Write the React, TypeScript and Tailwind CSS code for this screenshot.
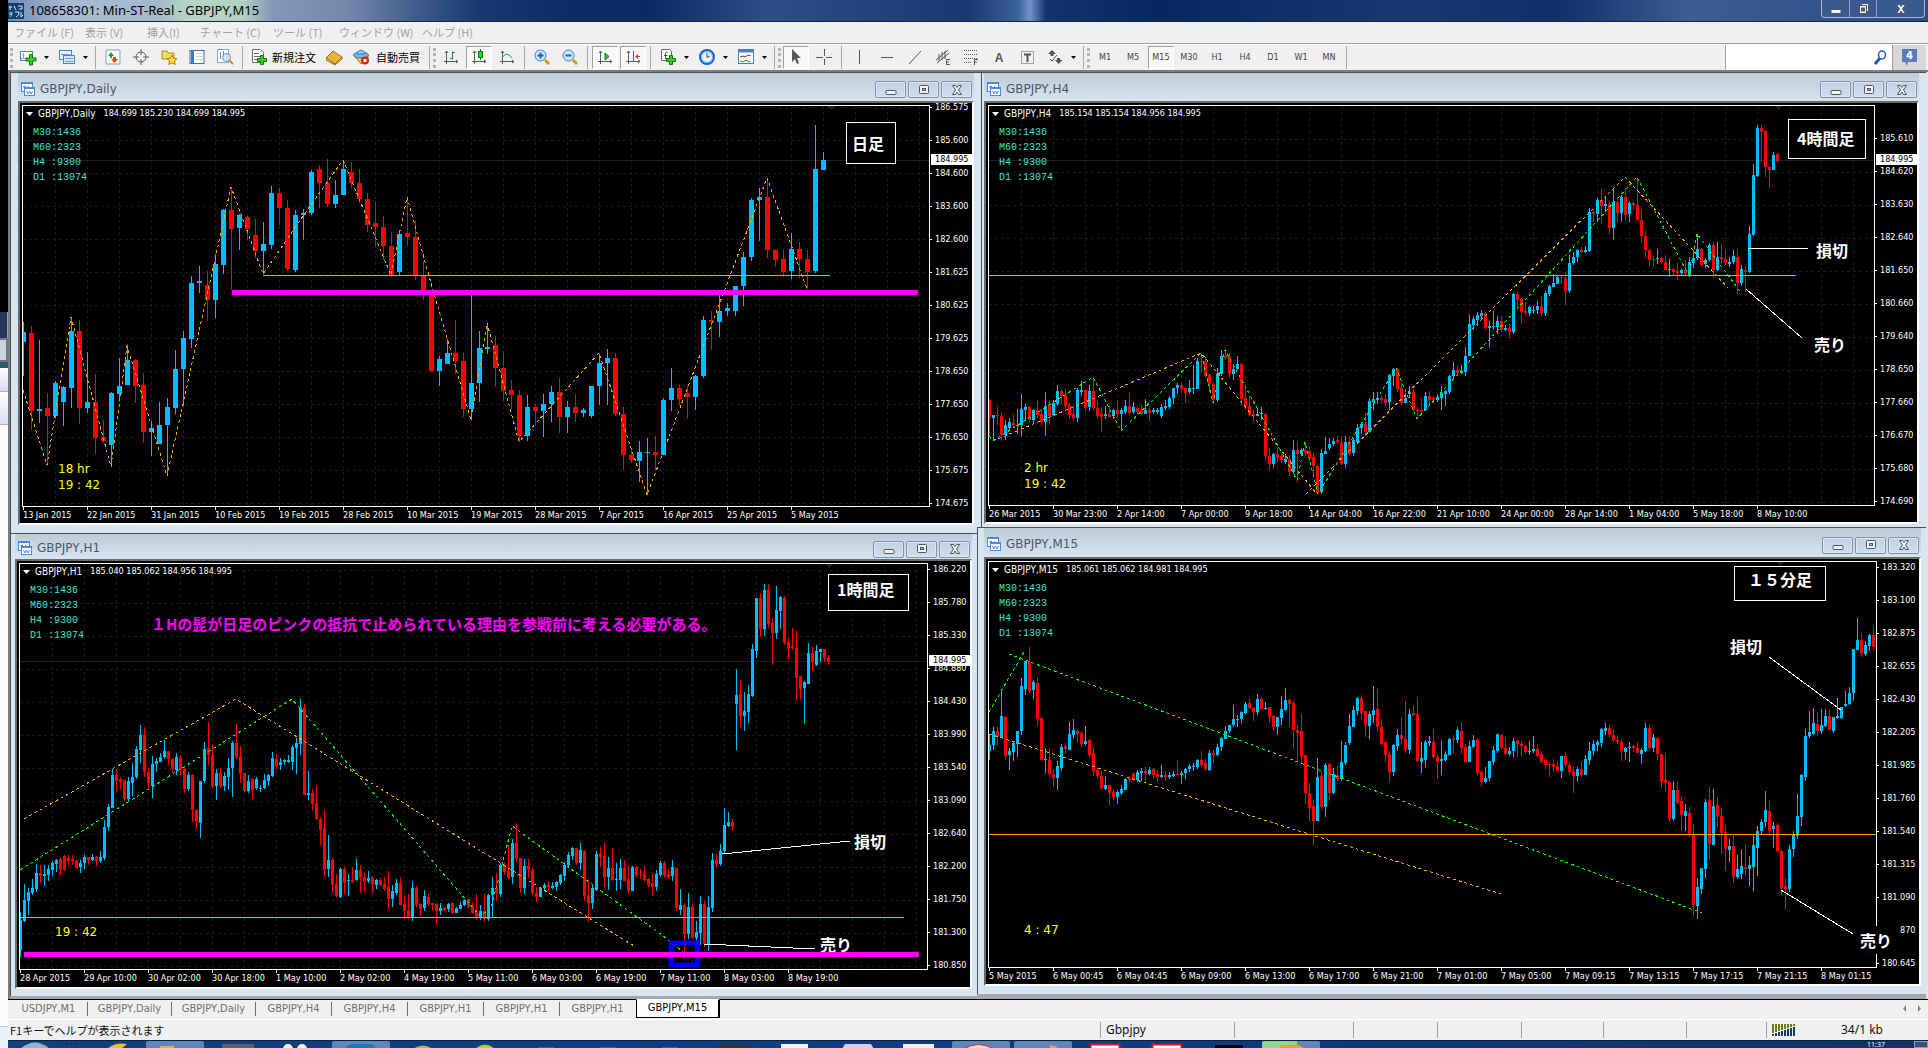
import React from 'react';

type Point = [number, number];

interface Note {
  text: string;
  at: Point;
  color?: string;
  size?: number;
}

interface ChartData {
  title: string;
  quote: string;
  timer: string[];
  origin: Point;
  step: number;
  body: number;
  candles: string;
  grid?: Point;
  bid?: number;
  zigzags: { color: string; points: string }[];
  levels: { y: number; from: number; to: number; color: string; width: number }[];
  pointers: string[];
  notes: Note[];
  box: [number, number, number, number];
  marker?: [number, number, number, number];
  cutout?: [number, number, number, number];
  shift: number;
  prices: string[];
  times: string[];
}

const BULL = '#00bfff';
const BEAR = '#ff0000';
const ORANGE = '#ffa500';
const LIME = '#00ff00';
const MAGENTA = '#ff00ff';

// Every candle is a direction (u/d) followed by high, body top, body bottom, low.
// Chart coordinates are kept in thirds of a pixel.
const daily: ChartData = {
  title: 'GBPJPY,Daily',
  quote: '184.699 185.230 184.699 184.995',
  timer: ['18 hr', '19 : 42'],
  origin: [69, 108],
  step: 24,
  body: 5,
  candles: `u758 788 816 920 d768 791 1025 1082 u810 1019 1025 1061 d969 1016 1038 1185 u933 941 1038 1046 u948 953 996 1070
u742 783 956 1016 d750 783 1016 1064 u846 996 1016 1031 d914 996 1106 1154 d1050 1103 1115 1121 u966 969 1127 1192
u864 948 974 988 u826 872 945 945 d868 872 948 1001 d911 945 1088 1121 u1053 1074 1088 1158 u996 1065 1122 1124
u984 1011 1067 1216 u840 899 1014 1032 u783 804 899 1010 u620 639 807 836 u588 635 641 671 d605 645 692 755
u552 582 692 746 u417 422 585 614 d352 422 479 662 u432 437 476 540 d440 441 479 512 d447 497 545 566
u456 524 545 614 u348 369 527 539 d354 369 416 467 d392 414 599 605 u420 437 602 606 u417 429 437 510
u300 306 431 437 d285 297 341 416 d267 339 404 411 u330 375 404 416 u270 297 375 375 d276 306 341 354
d297 339 389 401 d369 387 465 486 d396 461 473 531 d440 471 530 570 d486 528 620 621 u480 492 608 620
d381 491 503 528 d453 503 615 632 d573 615 660 692 d660 675 905 908 u858 867 905 948 u807 849 884 884
d750 849 875 914 d849 873 1019 1043 u675 939 1019 1050 u783 834 941 998 u760 831 837 854 d798 825 896 953
d843 894 963 995 d930 960 977 1019 d960 975 1098 1118 u975 1011 1098 1115 d1002 1011 1025 1065 u972 1002 1025 1101
u948 966 1004 1058 d924 966 1043 1091 u993 1011 1043 1091 d972 1011 1031 1058 u1014 1020 1031 1043 u948 948 1040 1046
u852 879 950 1005 u837 864 881 1007 d849 864 1034 1040 d1011 1034 1157 1202 d1137 1155 1172 1181 u1113 1146 1175 1236
u1104 1146 1148 1275 d1098 1146 1155 1200 u984 990 1155 1155 u894 954 992 1025 d945 954 987 1007 d948 969 983 1049
u917 918 983 1022 u738 750 920 926 d723 750 758 840 u675 723 758 803 u699 714 725 740 u648 648 725 740
u546 561 650 708 u384 390 563 575 u354 381 392 513 d324 381 542 566 d537 540 572 593 d540 567 608 623
u489 537 605 629 d516 537 569 626 d540 567 608 658 u165 297 605 611 u246 270 302 302`,
  grid: [166, 112],
  bid: 270,
  zigzags: [
    {
      color: ORANGE,
      points:
        '70,960 142,1185 214,742 334,1192 382,828 502,1218 694,352 790,614 838,545 910,440 1030,270 1174,617 1222,381 1294,640 1414,1052 1462,760 1558,1118 1798,850 1942,1276 2302,324 2422,658',
    },
  ],
  levels: [
    { y: 616, from: 790, to: 2492, color: ORANGE, width: 1 },
    { y: 667, from: 697, to: 2755, color: MAGENTA, width: 5 },
  ],
  pointers: [],
  notes: [{ text: '日足', at: [2557, 220] }],
  box: [2539, 157, 148, 123],
  shift: 2512,
  prices: ['186.575', '185.600', '184.600', '183.600', '182.600', '181.625', '180.625', '179.625', '178.650', '177.650', '176.650', '175.675', '174.675'],
  times: ['13 Jan 2015', '22 Jan 2015', '31 Jan 2015', '10 Feb 2015', '19 Feb 2015', '28 Feb 2015', '10 Mar 2015', '19 Mar 2015', '28 Mar 2015', '7 Apr 2015', '16 Apr 2015', '25 Apr 2015', '5 May 2015'],
};

const h4: ChartData = {
  title: 'GBPJPY,H4',
  quote: '185.154 185.154 184.956 184.995',
  timer: ['2 hr', '19 : 42'],
  origin: [27, 108],
  step: 12,
  body: 3,
  candles: `d988 990 1046 1100 u1035 1035 1046 1115 d1010 1035 1040 1065 d1028 1038 1095 1115 u1050 1067 1095 1112 u1046 1056 1074 1080
d1032 1059 1067 1074 u1018 1065 1068 1092 u972 1017 1067 1098 u1002 1012 1020 1050 d1010 1012 1052 1056 u1018 1020 1052 1062
d990 1020 1036 1046 d1018 1034 1058 1070 u968 1010 1058 1098 d990 1010 1038 1066 u992 999 1036 1040 u945 963 1002 1010
d960 963 978 1002 d957 976 1008 1018 d1000 1006 1036 1048 d1005 1034 1046 1055 u954 962 1046 1056 u934 960 966 978
d960 960 1014 1024 u945 965 1012 1024 d924 965 1016 1020 d990 1014 1040 1048 d1012 1034 1041 1088 u1008 1034 1040 1048
d1005 1032 1041 1041 u1018 1020 1040 1048 d990 1020 1034 1046 u1014 1022 1032 1082 u990 1008 1026 1034 d970 1008 1029 1034
u996 1012 1028 1034 d1012 1014 1028 1034 d1005 1022 1032 1036 u987 1020 1032 1034 d1014 1020 1029 1055 u1016 1022 1028 1034
u1014 1020 1028 1034 u1002 1012 1038 1044 u990 1008 1014 1020 u978 984 1012 1018 u954 956 986 1002 u940 945 956 972
d936 945 958 970 d954 956 970 1001 u930 954 968 974 u885 954 957 974 u864 873 957 957 d852 873 878 906
d862 876 918 924 d912 915 944 966 d936 942 992 999 u894 912 992 998 u840 858 914 920 d837 858 864 870
d850 862 914 924 u888 898 914 930 u860 882 898 902 d880 882 988 1010 d950 986 1010 1020 d980 1008 1036 1040
d1022 1034 1040 1058 u1018 1032 1038 1040 u1012 1030 1034 1052 d1030 1032 1160 1174 d1134 1158 1184 1200 u1150 1154 1182 1194
d1134 1154 1164 1176 d1156 1160 1170 1180 u1152 1168 1178 1184 d1156 1168 1206 1220 u1110 1142 1208 1214 d1116 1142 1152 1236
u1136 1142 1152 1158 d1116 1142 1150 1160 d1130 1144 1164 1170 d1150 1162 1190 1216 d1185 1188 1270 1274 u1138 1150 1268 1274
u1101 1144 1152 1152 u1104 1122 1134 1140 u1106 1114 1122 1130 d1098 1112 1118 1124 d1098 1116 1182 1186 u1098 1116 1182 1196
d1098 1116 1152 1160 u1106 1112 1150 1160 u1062 1074 1116 1118 u1056 1064 1076 1094 d1030 1064 1086 1098 u984 993 1086 1090
u966 988 998 1022 u966 984 990 1002 d978 984 990 1000 d974 988 1001 1010 u912 915 998 1022 u894 897 918 948
d894 897 957 966 d939 954 999 1006 u969 984 999 1001 u948 966 972 984 d957 966 1022 1028 d1012 1020 1023 1048
d984 1020 1024 1036 u966 978 1022 1024 d963 978 990 1004 d980 986 990 998 u974 982 990 998 u948 969 984 1020
u960 964 972 1008 u915 918 966 972 u876 900 920 925 d890 900 909 920 u885 903 909 914 u831 858 906 920
u735 762 860 860 u738 747 766 780 u726 735 750 768 u720 729 738 748 d726 729 776 780 u754 768 774 836
u723 768 771 780 u738 753 771 792 d740 753 780 786 u766 774 780 784 d764 774 786 804 u669 672 786 792
d666 672 690 716 d684 687 726 762 d696 724 729 740 u708 711 729 738 u708 720 724 734 u693 708 722 732
d678 708 729 738 u663 669 729 738 u645 648 672 680 u612 639 651 651 u617 621 642 642 d618 621 626 644
d606 624 663 705 u555 579 663 670 u546 561 579 585 u537 540 563 576 d531 540 546 550 u530 540 546 550
u414 426 543 546 d418 426 434 456 u384 390 434 456 d357 390 410 460 u378 402 410 426 d396 402 474 492
u354 396 474 510 d381 396 429 460 u376 381 429 456 d355 381 435 450 u393 399 432 458 d396 399 406 420
d324 405 452 452 d420 450 500 520 d480 498 542 564 d537 540 570 590 d560 568 571 590 u537 564 569 584
d561 564 578 582 d555 576 600 602 u567 597 601 623 d596 597 606 618 d579 603 609 630 u597 600 609 615
d570 600 614 618 u561 576 615 623 u540 564 579 595 u492 537 566 572 d536 537 585 590 u566 570 584 596
u519 525 572 574 d516 525 600 624 u516 561 600 605 d522 561 568 584 d540 567 581 586 u561 576 582 592
u540 558 578 582 d540 561 641 674 u587 599 641 650 d588 600 606 668 u468 492 606 611 u282 315 495 500
u165 174 318 321 d165 174 186 276 d182 183 293 323 d290 291 300 356 u246 255 302 302 d251 252 273 276`,
  grid: [124, 208],
  bid: 270,
  zigzags: [
    { color: ORANGE, points: '40,1115 664,850 1012,1274' },
    { color: ORANGE, points: '978,1274 1936,322 2246,655' },
    {
      color: LIME,
      points:
        '28,1098 40,1115 340,922 424,1085 664,850 700,999 736,840 952,1232 976,1116 1016,1274 1250,894 1312,1048 1432,915 1972,322 2128,618 2152,492 2282,665',
    },
  ],
  levels: [{ y: 616, from: 28, to: 2450, color: ORANGE, width: 1 }],
  pointers: ['2304,535 2484,535', '2298,657 2468,805'],
  notes: [
    { text: '4時間足', at: [2452, 205] },
    { text: '損切', at: [2508, 541] },
    { text: '売り', at: [2502, 823] },
  ],
  box: [2425, 148, 232, 117],
  shift: 2412,
  prices: ['185.610', '184.620', '183.630', '182.640', '181.650', '180.660', '179.640', '178.650', '177.660', '176.670', '175.680', '174.690'],
  times: ['26 Mar 2015', '30 Mar 23:00', '2 Apr 14:00', '7 Apr 00:00', '9 Apr 18:00', '14 Apr 04:00', '16 Apr 22:00', '21 Apr 10:00', '24 Apr 00:00', '28 Apr 14:00', '1 May 04:00', '5 May 18:00', '8 May 10:00'],
};

const h1: ChartData = {
  title: 'GBPJPY,H1',
  quote: '185.040 185.062 184.956 184.995',
  timer: ['19 : 42'],
  origin: [60, 117],
  step: 12,
  body: 3,
  candles: `u1162 1186 1277 1296 u1079 1127 1189 1193 u1091 1103 1129 1172 u1064 1091 1106 1112 u1019 1046 1094 1103 d1020 1046 1054 1076
u1020 1049 1054 1085 u1022 1034 1052 1070 u1010 1016 1037 1054 u1004 1006 1018 1042 d996 1004 1036 1050 d991 993 1036 1038
d990 1001 1008 1020 d990 1004 1010 1020 d1006 1008 1030 1032 u1006 1014 1028 1046 u992 998 1016 1034 d996 998 1006 1020
u988 998 1006 1008 d994 998 1010 1024 u980 998 1010 1014 u885 906 1001 1006 u838 846 908 918 u732 750 849 851
d732 750 768 798 d756 762 771 792 d765 766 824 830 u756 768 824 828 u714 756 774 815 u663 672 758 764
u600 630 675 714 d606 632 741 758 d729 741 774 796 u693 717 784 820 u700 708 717 742 u684 696 711 711
u646 678 696 702 d678 678 704 720 d699 702 732 744 u684 698 735 750 d690 699 735 750 d728 733 792 804
u741 750 792 800 d748 750 857 892 d854 855 892 914 u768 768 896 940 u651 672 770 776 d591 669 692 722
d657 690 784 790 u732 745 784 826 d729 745 784 790 u741 753 784 798 u699 729 756 796 u648 654 730 818
d597 654 698 702 d663 693 748 776 d744 746 799 803 u750 770 799 804 d760 762 796 826 u756 762 790 795
u780 790 794 802 u747 766 790 793 u747 752 768 784 u681 699 755 756 d687 702 725 732 u700 711 720 735
u702 705 713 720 u690 705 711 714 u660 666 711 736 u640 654 669 747 u522 549 657 690 d537 549 810 812
u738 804 812 826 d792 805 837 858 d780 836 882 885 d876 882 916 960 d855 911 1037 1057 u930 1006 1034 1057
d1001 1006 1080 1104 d1048 1078 1115 1118 u1031 1034 1116 1120 d1025 1034 1074 1108 u1048 1066 1070 1115 d1028 1065 1072 1075
u1004 1037 1066 1070 d1022 1037 1060 1104 d1046 1058 1070 1103 u1040 1060 1070 1076 d1054 1058 1078 1104 u1064 1067 1080 1092
d1060 1066 1080 1085 d1056 1078 1094 1098 d1038 1088 1122 1154 u1080 1100 1124 1146 u1064 1074 1104 1112 d1058 1074 1140 1142
d1112 1138 1158 1182 d1108 1156 1180 1182 u1070 1091 1180 1190 d1085 1091 1140 1148 d1136 1138 1152 1174 u1097 1115 1150 1160
d1109 1117 1138 1144 d1134 1136 1142 1160 d1136 1138 1160 1202 u1136 1151 1158 1172 d1146 1150 1156 1160 u1136 1139 1154 1162
d1132 1136 1164 1168 u1146 1150 1164 1166 u1132 1140 1152 1154 u1122 1126 1142 1144 d1122 1124 1146 1150 d1132 1142 1166 1168
d1108 1162 1176 1186 u1142 1158 1178 1186 d1108 1158 1184 1192 u1108 1112 1184 1190 u1056 1091 1112 1178 d1046 1091 1106 1130
u1014 1020 1109 1116 d1012 1022 1042 1050 d962 1040 1060 1064 u942 954 1058 1078 d896 956 1002 1012 d1000 1001 1091 1106
u1004 1024 1091 1108 d1002 1024 1036 1060 d1030 1035 1105 1110 d1086 1104 1116 1132 u1086 1091 1116 1118 u1074 1080 1090 1100
d1070 1082 1086 1098 u1073 1085 1090 1094 u1070 1073 1086 1098 u1048 1052 1074 1080 u1012 1020 1055 1070 u982 992 1020 1030
u966 971 994 1006 d970 971 1016 1022 u956 977 1016 1036 d976 978 1115 1128 d1062 1112 1136 1193 u1080 1091 1136 1152
u978 989 1095 1098 d966 989 997 1026 d952 995 1056 1086 u998 1031 1056 1096 d970 1031 1066 1070 u1016 1063 1066 1098
u1004 1031 1066 1094 d1006 1031 1068 1070 d1024 1064 1100 1104 u1024 1026 1098 1100 d1024 1026 1052 1056 d1032 1048 1052 1064
d1024 1049 1066 1068 d1060 1064 1082 1088 d1046 1076 1088 1115 u1036 1048 1087 1098 u1008 1016 1050 1056 d1010 1016 1052 1058
d1034 1049 1056 1064 u1007 1028 1055 1070 d1031 1031 1151 1158 u1094 1142 1156 1172 d1136 1142 1229 1303 u1106 1148 1229 1244
d1136 1148 1241 1243 u1190 1223 1241 1245 u1115 1139 1226 1262 d1128 1139 1257 1266 u1115 1148 1257 1280 u986 1007 1151 1162
d988 1007 1019 1028 u958 980 1019 1024 u850 902 980 984 u863 893 905 908 d884 893 908 920 u432 510 537 675
d465 507 573 609 u501 558 573 620 u480 507 561 594 u357 372 513 516 u219 219 378 399 d204 219 312 333
u177 195 312 333 d177 195 297 310 d282 294 324 420 u183 255 324 342 u213 216 258 312 d213 219 354 360
d339 351 372 402 d309 366 370 376 d318 369 459 525 d453 453 492 525 u468 471 489 597 u354 384 477 477
d366 384 413 440 u360 378 420 423 u372 372 381 412 d372 372 402 413 d392 396 411 420`,
  grid: [157, 136],
  bid: 409,
  zigzags: [
    { color: ORANGE, points: '73,883 709,524 1904,1264' },
    { color: LIME, points: '61,1035 877,523 1440,1175 1475,1150 1537,905 2010,1250 2053,1285' },
  ],
  levels: [
    { y: 1176, from: 61, to: 2712, color: ORANGE, width: 1 },
    { y: 1287, from: 73, to: 2758, color: MAGENTA, width: 5 },
  ],
  pointers: ['2167,987 2552,948', '2113,1257 2445,1273'],
  notes: [
    { text: '1時間足', at: [2513, 193] },
    { text: '損切', at: [2563, 950] },
    { text: '売り', at: [2462, 1258] },
    { text: '１Hの髭が日足のピンクの抵抗で止められている理由を参戦前に考える必要がある。', at: [455, 295], color: MAGENTA, size: 15 },
  ],
  box: [2485, 148, 241, 109],
  marker: [2014, 1254, 79, 66],
  shift: 2506,
  prices: ['186.220', '185.780', '185.330', '184.880', '184.430', '183.990', '183.540', '183.090', '182.640', '182.200', '181.750', '181.300', '180.850'],
  times: ['28 Apr 2015', '29 Apr 10:00', '30 Apr 02:00', '30 Apr 18:00', '1 May 10:00', '2 May 02:00', '4 May 19:00', '5 May 11:00', '6 May 03:00', '6 May 19:00', '7 May 11:00', '8 May 03:00', '8 May 19:00'],
};

const m15: ChartData = {
  title: 'GBPJPY,M15',
  quote: '185.061 185.062 184.981 184.995',
  timer: ['4 : 47'],
  origin: [27, 111],
  step: 12,
  body: 3,
  candles: `u628 660 678 705 u606 620 662 675 d606 620 638 660 u500 573 640 641 d575 576 695 705 u670 678 692 735
u650 655 682 708 u618 618 658 698 u459 483 620 630 u408 408 492 510 d366 411 498 507 u465 473 495 522
d456 474 582 603 d578 579 707 710 u669 702 707 746 d669 707 749 758 d734 747 759 788 u710 725 759 797
u657 666 731 738 d656 663 672 687 u591 627 675 675 u582 615 630 644 d612 618 628 654 d620 624 657 668
u603 648 657 660 d644 645 690 698 d666 684 738 753 d728 735 753 762 d740 753 791 797 u753 780 794 795
d780 780 804 842 d792 802 818 826 u795 803 818 839 u780 794 806 812 u759 762 797 797 d753 759 765 773
d744 744 766 768 u735 741 766 772 u730 738 744 770 d728 738 744 776 u726 735 747 750 d729 734 750 762
d735 749 756 773 u720 750 756 760 d738 752 757 768 u741 750 756 762 u738 747 753 757 d708 747 750 750
u738 744 750 777 u729 732 744 762 u717 725 732 743 u716 724 728 740 u702 705 726 732 d678 705 720 726
d702 716 734 738 u675 684 735 738 d675 684 690 716 u657 666 690 693 u636 639 668 680 u603 618 642 642
u600 600 620 626 u540 582 600 606 u570 582 585 606 u558 561 584 597 u531 537 564 567 d522 534 549 552
d548 549 562 590 u507 522 563 570 d516 522 552 555 u531 549 551 555 d546 546 576 594 d570 573 608 620
u576 576 606 632 u513 552 581 600 u489 525 555 558 d524 525 537 603 d530 534 617 672 d600 615 624 711
d567 618 698 716 d690 690 806 837 d774 806 851 890 d824 845 890 962 u699 756 890 890 d738 753 848 857
u714 720 848 878 d714 717 806 830 u729 747 806 809 d723 752 764 768 u648 711 764 770 u651 660 714 720
u567 603 655 660 u545 555 606 606 u516 519 558 570 d510 519 564 582 d558 558 600 638 u558 567 603 644
u483 555 570 594 d492 552 606 622 d582 606 657 662 d651 652 690 712 d678 687 741 771 u657 660 741 753
u612 630 663 680 d576 632 642 657 d528 642 675 686 u554 567 675 687 d540 564 570 573 d519 567 708 711
u651 699 711 744 u645 651 707 728 u633 648 654 665 d612 652 696 700 d690 696 711 762 u645 702 708 750
u678 687 705 711 u641 642 690 690 d630 642 645 684 u606 615 645 654 d594 618 669 687 d657 666 711 714
u650 663 711 711 u630 645 668 670 d642 642 744 750 d735 741 773 785 u726 759 771 774 u708 708 761 770
u663 675 711 720 u627 627 678 684 d630 630 669 672 d636 669 687 690 u666 678 687 693 u639 648 678 698
d645 645 657 696 d648 657 663 693 d660 663 681 684 u648 678 682 692 u633 672 680 684 d660 672 693 697
d681 687 711 714 d700 705 720 732 d711 717 720 756 d702 717 726 740 d712 723 738 740 u693 693 738 759
d681 693 720 726 d711 720 741 752 d726 738 753 806 u726 732 753 771 d708 732 750 758 u690 702 750 750
u651 678 705 720 u645 657 678 690 u645 651 660 680 u609 612 654 666 u594 609 620 630 d600 609 630 636
d612 630 645 651 d630 645 651 657 d642 651 678 708 u666 669 681 702 u651 666 670 711 d660 665 671 681
d651 669 684 684 u669 675 687 717 u594 609 678 681 d600 609 669 678 u627 636 669 681 d639 639 687 705
d687 687 771 791 d687 765 774 803 d770 771 884 893 u768 797 884 890 d768 797 836 839 d818 830 872 920
u839 860 875 920 d848 866 932 936 d899 932 1141 1175 u1061 1088 1145 1184 u1031 1031 1094 1109 u824 833 1034 1061
d788 827 959 1007 u794 845 962 962 d818 842 878 908 d851 875 926 989 d902 923 974 1040 u944 965 977 1013
d932 965 1058 1076 u992 1034 1058 1064 u977 1025 1049 1064 d959 1028 1034 1055 u995 1022 1034 1085 u932 962 1028 1100
u905 920 971 1055 u884 893 920 929 u800 857 893 908 d830 860 920 935 u893 905 914 971 d896 902 980 983
d977 980 1091 1112 d1061 1085 1094 1154 u962 974 1094 1103 u920 932 974 998 u809 875 935 944 u747 750 878 905
u612 633 756 768 u558 621 633 640 u549 594 627 630 d561 597 618 633 u552 600 618 627 u552 573 603 606
d552 573 615 617 u576 576 618 624 u519 573 579 582 u546 546 579 582 u498 537 545 546 u486 504 537 540
u372 372 504 528 u279 345 375 375 d324 345 384 396 u348 360 387 393 u327 330 363 378 d303 330 366 375`,
  zigzags: [
    { color: LIME, points: '28,563 136,375' },
    { color: LIME, points: '88,387 2166,1165' },
    { color: ORANGE, points: '28,628 1564,1108' },
  ],
  levels: [{ y: 927, from: 28, to: 2690, color: ORANGE, width: 1 }],
  pointers: ['2368,396 2585,556', '2404,1097 2621,1227'],
  notes: [
    { text: '１５分足', at: [2304, 162] },
    { text: '損切', at: [2250, 364] },
    { text: '売り', at: [2640, 1246] },
  ],
  box: [2263, 124, 274, 102],
  cutout: [2655, 1203, 90, 84],
  shift: 2419,
  prices: ['183.320', '183.100', '182.875', '182.655', '182.430', '182.205', '181.985', '181.760', '181.540', '181.315', '181.090', '870', '180.645'],
  times: ['5 May 2015', '6 May 00:45', '6 May 04:45', '6 May 09:00', '6 May 13:00', '6 May 17:00', '6 May 21:00', '7 May 01:00', '7 May 05:00', '7 May 09:15', '7 May 13:15', '7 May 17:15', '7 May 21:15', '8 May 01:15'],
};

const Plot: React.FC<{ chart: ChartData }> = ({ chart }) => {
  const [ox, oy] = chart.origin;
  const px = (v: number) => Math.floor((v - ox) / 3);
  const py = (v: number) => Math.floor((v - oy) / 3);
  const line = (points: string) =>
    points
      .split(' ')
      .map((p) => {
        const [x, y] = p.split(',').map(Number);
        return `${px(x)},${py(y)}`;
      })
      .join(' ');
  const half = (chart.body - 1) / 2;
  const candles = chart.candles.match(/[ud]\d+ \d+ \d+ \d+/g) ?? [];
  const { grid, bid, marker, cutout } = chart;

  return (
    <>
      <svg className="absolute inset-0 h-full w-full overflow-hidden" shapeRendering="crispEdges">
        {grid && (
          <g fill="none" stroke="#1a1a1a" strokeDasharray="3 3">
            {Array.from({ length: 29 }, (_, i) => px(grid[0] + i * 96)).map((x) => (
              <path key={x} d={`M${x + 0.5} 0V600`} />
            ))}
            {Array.from({ length: 14 }, (_, i) => py(grid[1] + i * 99)).map((y) => (
              <path key={y} d={`M0 ${y + 0.5}H1400`} />
            ))}
          </g>
        )}
        {bid && <rect x="0" y={py(bid)} width="100%" height="1" fill="#202020" />}
        <path d={`M${px(chart.shift) - 10} 0h9l-4.500 4z`} fill="#202020" />
        {candles.map((candle, i) => {
          const [high, top, bottom, low] = candle.slice(1).split(' ').map(Number);
          const x = px(1 + ox + i * chart.step);
          return (
            <g key={i} fill={candle[0] === 'u' ? BULL : BEAR}>
              <rect x={x} y={py(high)} width="1" height={Math.max(1, py(low) - py(high))} />
              <rect x={x - half} y={py(top)} width={chart.body} height={Math.max(1, py(bottom) - py(top))} />
            </g>
          );
        })}
        {chart.zigzags.map((z) => (
          <polyline key={z.points} points={line(z.points)} fill="none" stroke={z.color} strokeDasharray="3 3" />
        ))}
        {chart.levels.slice(0, 1).map((l) => (
          <rect key={l.y} x={px(l.from)} y={py(l.y)} width={px(l.to) - px(l.from)} height="1" fill={l.color} />
        ))}
      </svg>
      <svg className="absolute inset-0 h-full w-full overflow-visible font-['Noto_Sans_CJK_JP',sans-serif] font-bold">
        <rect x={px(chart.box[0]) + 0.5} y={py(chart.box[1]) + 0.5} width={Math.round(chart.box[2] / 3)} height={Math.round(chart.box[3] / 3)} fill="#000" stroke="#fff" />
        {marker && <rect x={px(marker[0])} y={py(marker[1])} width={marker[2] / 3} height={marker[3] / 3} fill="none" stroke="#0000ff" strokeWidth="5" />}
        {chart.pointers.map((p) => (
          <polyline key={p} points={line(p)} fill="none" stroke="#fff" shapeRendering="crispEdges" />
        ))}
        {cutout && <rect x={px(cutout[0])} y={py(cutout[1])} width={cutout[2] / 3} height={cutout[3] / 3} fill="#000" />}
        {chart.notes.map((n) => (
          <text key={n.text} x={px(n.at[0])} y={py(n.at[1])} dominantBaseline="central" fontSize={n.size ?? 16} fill={n.color ?? '#fff'}>
            {n.text}
          </text>
        ))}
        {chart.levels.slice(1).map((l) => (
          <rect key={l.y} x={px(l.from)} y={py(l.y) - 2} width={px(l.to) - px(l.from)} height={l.width} rx="1" fill={l.color} />
        ))}
      </svg>
    </>
  );
};

const Glyph: React.FC<{ kind: string }> = ({ kind }) => (
  <svg width="14" height="12" viewBox="0 0 14 12" fill="#f4f4f4" stroke="#4b5668">
    {kind === 'min' && <rect x="2" y="6.500" width="10" height="4" rx="1" />}
    {kind === 'max' && (
      <>
        <rect x="2.500" y="1.500" width="9" height="8" rx="1" />
        <rect x="5.500" y="4.500" width="3" height="2" fill="#a9bdd0" />
      </>
    )}
    {kind === 'restore' && (
      <>
        <path d="M5.500 .5h7v8h-2" />
        <rect x="3.500" y="2.500" width="7" height="8" />
        <rect x="5.500" y="5" width="3" height="3" fill="#47669a" />
      </>
    )}
    {kind === 'close' && <path d="M2.500 1.500h3l1.500 2 1.500-2h3l-3 4.500 3 4.500h-3l-1.500-2.500-1.500 2.500h-3l3-4.500z" />}
  </svg>
);

interface WindowProps {
  chart: ChartData;
  frame: string;
  bar: string;
  plot: string;
  timer: string;
  axis: string;
  axisWidth: string;
  times: string;
  badge?: string;
}

const ChartWindow: React.FC<WindowProps> = ({ chart, frame, bar, plot, timer, axis, axisWidth, times, badge }) => (
  <section className={`border-t border-l border-[#4c5258] bg-[#d7e4f2] ${frame}`}>
    <header className={`flex items-center bg-linear-to-b from-[#bdccd9] to-[#d7e4f2] ${bar}`}>
      <svg width="15" height="15" viewBox="0 0 15 15" fill="#fff" stroke="#4a8ad8" className="mt-1">
        <rect x=".5" y=".5" width="11" height="9" />
        <path d="M1 1.500h10M2 5l2-1 2 2 2-2" />
        <rect x="3.500" y="5.500" width="10" height="8" />
        <path d="M4 6.500h9M5.500 9l1.500 3 1.500-3 1.500 3 1.500-3" fill="none" />
      </svg>
      <h2 className="ml-[4px] mt-[3px] flex-1 text-[12px] leading-5 text-[#4e5660] font-['DejaVu_Sans',sans-serif]">{chart.title}</h2>
      <div className="mt-[5px] flex gap-[2px]">
        {['min', 'max', 'close'].map((kind) => (
          <button key={kind} aria-label={kind} className="flex h-[17px] w-[31px] items-center justify-center rounded-[2px] border border-[#8291ab] bg-linear-to-b from-[#c2d1df] to-[#cfdeed] shadow-[inset_0_0_0_1px_#dbe7f3]">
            <Glyph kind={kind} />
          </button>
        ))}
      </div>
    </header>
    <div className="border-2 border-t-[#6a6a6a] border-r-white border-b-white border-l-[#6a6a6a] bg-black pt-[2px] pl-[2px] text-[9px] text-white font-['DejaVu_Sans_Condensed','DejaVu_Sans',sans-serif]">
      <div className="flex">
        <div className={`relative flex min-w-0 flex-1 flex-col justify-between border border-white ${plot}`}>
          <Plot chart={chart} />
          <div className="relative">
            <div className="flex h-[15px] items-center pl-[3px] text-[10px]">
              <svg width="7" height="4" className="mr-[5px]">
                <path d="M0 0h7L3.500 4z" fill="#fff" />
              </svg>
              <span>{chart.title}</span>
              <span className="ml-[8px] text-[9px]">{chart.quote}</span>
            </div>
            <pre className="mt-[4px] pl-[10px] text-[10px] leading-[15px] text-[#40e0d0] font-['Liberation_Mono',monospace]">{'M30:1436\nM60:2323\nH4 :9300\nD1 :13074'}</pre>
          </div>
          <div className={`relative pl-[35px] text-[12px] leading-4 text-[#ffff00] font-['DejaVu_Sans',sans-serif] ${timer}`}>
            {chart.timer.map((t) => (
              <p key={t}>{t}</p>
            ))}
          </div>
        </div>
        <div className={`relative shrink-0 ${axisWidth}`}>
          <ol className={`h-0 ${axis}`}>
            {chart.prices.map((p) => (
              <li key={p} className="flex h-[33px] items-center">
                {p.length > 3 && <span className="h-px w-[2px] bg-white" />}
                <span className={p.length > 3 ? 'ml-[3px]' : 'ml-[23px]'}>{p}</span>
              </li>
            ))}
          </ol>
          {badge && <span className={`absolute right-0 left-px h-[11px] bg-white pl-1 leading-[11px] text-black ${badge}`}>184.995</span>}
        </div>
      </div>
      <ol className={`flex overflow-hidden pl-px ${times}`}>
        {chart.times.map((t) => (
          <li key={t} className="w-16 shrink-0 whitespace-nowrap">
            <span className="block h-[3px] w-px bg-white" />
            <span className="block leading-[11px]">{t}</span>
          </li>
        ))}
      </ol>
    </div>
  </section>
);

const icons: Record<string, React.ReactNode> = {
  newChart: (
    <>
      <rect x=".5" y="2.500" width="12" height="9" fill="#fff" stroke="#4583c4" />
      <path d="M3.500 4v5M2 6h3M1 9.500h7" stroke="#8aaed0" />
      <path d="M9.500 5.500h3v3.500h3.500v3h-3.500v4h-3v-4h-3.500v-3h3.500z" fill="#2bd31c" stroke="#0a7a10" />
    </>
  ),
  profiles: (
    <>
      <rect x=".5" y="1.500" width="12" height="9" fill="#e8f3fc" stroke="#4583c4" />
      <rect x="4.500" y="6.500" width="11" height="8" fill="#d4e8fa" stroke="#4583c4" />
      <path d="M2 5.500h9M6 9.500h8M6 12.500h8" stroke="#6b9fd2" />
    </>
  ),
  market: (
    <>
      <rect x="1" y="1" width="14" height="14" rx="1" fill="#fff" stroke="#6ea3d4" />
      <path d="M3 7l3-4 3 4h-2v2H5V7z" fill="#28a41c" />
      <path d="M8 10V8h3v2h2l-3.500 4L6 10z" fill="#e0481c" />
    </>
  ),
  target: (
    <g fill="none" stroke="#5c5c5c">
      <circle cx="8" cy="8" r="5" />
      <path d="M8 0v6M8 10v6M0 8h6M10 8h6" />
    </g>
  ),
  favorites: (
    <>
      <path d="M1 2h5l1 2h6v6H1z" fill="#f5dc6a" stroke="#b08a18" />
      <path d="M11 6l1.600 3.200 3.400.4-2.500 2.300.7 3.600-3.200-1.700-3.200 1.700.7-3.600L6 9.600l3.400-.4z" fill="#ffd63c" stroke="#b07c10" />
    </>
  ),
  terminal: (
    <>
      <rect x="1" y="1.500" width="14" height="13" fill="#fff" stroke="#3c6ea8" />
      <path d="M2 2h3v12H2z" fill="#3f78bd" />
      <path d="M7 4.500h7M7 7.500h7M7 10.500h7" stroke="#c4d4e4" />
    </>
  ),
  tester: (
    <>
      <rect x=".5" y=".5" width="11" height="13" fill="#fff" stroke="#8ba6c2" />
      <path d="M3.500 3v7M6.500 2v8M9.500 4v7" stroke="#7f8a94" />
      <circle cx="9.500" cy="8.500" r="4" fill="#cfe9fa" fillOpacity=".8" stroke="#5b95c8" />
      <path d="M12 11l4 4" stroke="#c88f1c" strokeWidth="2" />
    </>
  ),
  order: (
    <>
      <path d="M1.500.5h8l3 3v10h-11z" fill="#fff" stroke="#6c6c6c" />
      <path d="M3 4.500h5M3 7.500h6M3 10.500h4" stroke="#666" />
      <path d="M9.500 6.500h3v3h3v3h-3v3h-3v-3h-3v-3h3z" fill="#2bd31c" stroke="#0a7a10" />
    </>
  ),
  book: (
    <>
      <path d="M0 9l7-7 9 6-7 7z" fill="#e8b637" stroke="#9c6c0c" />
      <path d="M0 9l9 6 7-7v2l-7 6-9-5z" fill="#fbe9a8" stroke="#9c6c0c" />
    </>
  ),
  expert: (
    <>
      <path d="M2 8l6 7 7-6V6H2z" fill="#f1c64c" stroke="#b5851c" />
      <ellipse cx="8" cy="6" rx="7.500" ry="3" fill="#74b9e8" stroke="#2f7ab4" />
      <path d="M4 5c0-5 8-5 8 0z" fill="#8fcdf2" stroke="#2f7ab4" />
      <circle cx="12" cy="11.500" r="4" fill="#dd2414" />
      <rect x="10.500" y="10" width="3" height="3" fill="#fff" />
    </>
  ),
  bars: (
    <g fill="none">
      <path d="M3.500 2v13M1 12.500h14M2 4l1.500-2L5 4M13 11l2 1.500-2 1.500" stroke="#5a5a5a" />
      <path d="M9.500 10.500V2.500M9.500 3.500h2.500M7 9.500h2.500" stroke="#1d8f28" />
    </g>
  ),
  candle: (
    <g fill="none">
      <path d="M3.500 2v13M1 12.500h14M2 4l1.500-2L5 4M13 11l2 1.500-2 1.500" stroke="#5a5a5a" />
      <path d="M9.500 0v11" stroke="#0b7d12" />
      <rect x="7.500" y="2.500" width="4" height="6" fill="#28d428" stroke="#0b7d12" />
    </g>
  ),
  lineChart: (
    <g fill="none">
      <path d="M3.500 2v13M1 12.500h14M2 4l1.500-2L5 4M13 11l2 1.500-2 1.500" stroke="#5a5a5a" />
      <path d="M3 9c3-5 6-5 10 0" stroke="#1d8f28" />
    </g>
  ),
  zoomIn: (
    <>
      <circle cx="6.500" cy="6.500" r="5.500" fill="#c9e6fa" stroke="#2b7fc6" />
      <path d="M3.500 6.500h6M6.500 3.500v6" stroke="#2460a4" strokeWidth="2" />
      <path d="M11 11l4 4" stroke="#d29a1c" strokeWidth="3" />
    </>
  ),
  zoomOut: (
    <>
      <circle cx="6.500" cy="6.500" r="5.500" fill="#c9e6fa" stroke="#2b7fc6" />
      <path d="M3.500 6.500h6" stroke="#2460a4" strokeWidth="2" />
      <path d="M11 11l4 4" stroke="#d29a1c" strokeWidth="3" />
    </>
  ),
  autoScroll: (
    <g fill="none">
      <path d="M3.500 2v13M1 12.500h14M2 4l1.500-2L5 4M13 11l2 1.500-2 1.500" stroke="#5a5a5a" />
      <path d="M8 4l4 3.500L8 11z" fill="#28c428" stroke="#0b7d12" />
    </g>
  ),
  shift: (
    <g fill="none">
      <path d="M3.500 2v13M1 12.500h14M2 4l1.500-2L5 4M13 11l2 1.500-2 1.500" stroke="#5a5a5a" />
      <path d="M8.500 2v10" stroke="#2a6ea8" />
      <path d="M10 7.500l3-2.500v2h2v1h-2v2z" fill="#d0401c" />
    </g>
  ),
  indicators: (
    <>
      <path d="M1.500.5h8l2 2v9h-10z" fill="#fff" stroke="#6c6c6c" />
      <path d="M5.500 10V4.500c0-1.500 1-1.500 2-1.500M4 6.500h3.500" stroke="#444" fill="none" />
      <path d="M9.500 6.500h3v3h3v3h-3v3h-3v-3h-3v-3h3z" fill="#2bd31c" stroke="#0a7a10" />
    </>
  ),
  clock: (
    <>
      <circle cx="8" cy="8" r="7" fill="#e6f3fd" stroke="#1b62c0" strokeWidth="2" />
      <circle cx="8" cy="8" r="5.500" fill="none" stroke="#69b4ee" />
      <path d="M8 4v4.500l3-1.500" fill="none" stroke="#4a4a4a" />
    </>
  ),
  template: (
    <>
      <rect x=".5" y=".5" width="15" height="14" fill="#fff" stroke="#4583c4" />
      <path d="M1 2h14" stroke="#4583c4" strokeWidth="3" />
      <path d="M2 8l3-1 2 1 3-2 3 1" fill="none" stroke="#a02818" />
      <path d="M2 12l3 1 3-2 3 2 2-1" fill="none" stroke="#289038" />
    </>
  ),
  cursor: <path d="M4 0v13l3-3 2 5 2-1-2-5h4z" fill="#555" />,
  cross: <path d="M8.500 0v7M8.500 10v6M0 8.500h7M10 8.500h6" stroke="#555" />,
  vline: <path d="M8.500 1v14" stroke="#555" />,
  hline: <path d="M2 8.500h12" stroke="#555" />,
  trend: <path d="M2 15L14 2" stroke="#555" />,
  channel: (
    <g stroke="#555">
      <path d="M1 11L13 1M2 14L14 4M4 5v7M7 3v8M10 2v8" />
      <path d="M15 10.500h-3.500v5H15M11.500 13H14" fill="none" />
    </g>
  ),
  fibo: (
    <g stroke="#555" fill="none">
      <path d="M1 1.500h13M1 5.500h13M1 9.500h13M1 13.500h8" strokeDasharray="1 1" />
      <path d="M15 10.500h-3.500V16M11.500 13H14" />
    </g>
  ),
  label: (
    <>
      <rect x="2.500" y="2.500" width="12" height="12" fill="none" stroke="#555" strokeDasharray="1 1" />
      <path d="M5 5.500h7M8.500 5v8" stroke="#555" strokeWidth="2" />
    </>
  ),
  arrows: (
    <>
      <path d="M1 5l4-4 4 4H6.500v2h-3V5zM8 11h2V9h3v2h2.500l-4 4z" fill="#555" />
      <path d="M3 10l2 2 5-6" stroke="#555" fill="none" />
    </>
  ),
};

const Icon: React.FC<{ name: string }> = ({ name }) => (
  <svg width="17" height="17" viewBox="0 0 17 17" className="shrink-0">
    {icons[name]}
  </svg>
);

const Tool: React.FC<{ name: string; pressed?: boolean }> = ({ name, pressed }) => (
  <button
    aria-label={name}
    className={`flex h-[23px] w-[26px] mx-px items-center justify-center ${pressed ? 'border border-[#a0a0a0] border-r-white border-b-white bg-[#f8f8f8]' : ''}`}
  >
    {name === 'text' ? <span className="text-[12px] font-bold text-[#555] font-['Liberation_Sans',sans-serif]">A</span> : <Icon name={name} />}
  </button>
);

const MenuTool: React.FC<{ name: string }> = ({ name }) => (
  <button aria-label={name} className="flex h-[23px] w-[39px] items-center gap-[7px] pl-[6px]">
    <Icon name={name} />
    <svg width="5" height="3">
      <path d="M0 0h5L2.500 3z" />
    </svg>
  </button>
);

const Separator = () => <span className="mx-[3px] h-[23px] w-px shrink-0 bg-[#a8a8a8]" />;
const Grip = () => <span className="h-[20px] w-1 shrink-0 border-l-[3px] border-dotted border-[#b4b4b4]" />;

const menus = [
  { text: 'ファイル (F)', width: 'w-[71px]' },
  { text: '表示 (V)', width: 'w-[62px]' },
  { text: '挿入(I)', width: 'w-[53px]' },
  { text: 'チャート (C)', width: 'w-[73px]' },
  { text: 'ツール (T)', width: 'w-[66px]' },
  { text: 'ウィンドウ (W)', width: 'w-[83px]' },
  { text: 'ヘルプ (H)', width: 'w-[71px]' },
];

const tabs = [
  { text: 'USDJPY,M1', width: 'w-[78px]' },
  { text: 'GBPJPY,Daily', width: 'w-[84px]' },
  { text: 'GBPJPY,Daily', width: 'w-[84px]' },
  { text: 'GBPJPY,H4', width: 'w-[76px]' },
  { text: 'GBPJPY,H4', width: 'w-[76px]' },
  { text: 'GBPJPY,H1', width: 'w-[76px]' },
  { text: 'GBPJPY,H1', width: 'w-[76px]' },
  { text: 'GBPJPY,H1', width: 'w-[76px]' },
];

const TitleBar = () => (
  <div className="flex h-[22px] items-start border-b border-[#1a2440] bg-[linear-gradient(90deg,#6f8cb4_0,#a9bad2_60px,#a3b9cc_150px,#b4d6c4_180px,#b0d2c0_235px,#8298ba_265px,#7487ac_340px,#44618f_400px,#17396f_470px,#0b2d64_560px,#0a2b62_640px,#2c4f86_760px,#17396f_960px,#3c6098_1010px,#7093ca_1022px,#12346c_1038px,#052860_1150px,#17396f_1400px,#0f3068_1550px,#3d5c92_1680px,#2c4c84_100%)]">
    <div className="flex h-full flex-1 items-center">
      <svg width="16" height="16" viewBox="0 0 16 16">
        <rect width="16" height="16" fill="#14406e" />
        <path d="M1 4h3M2 3v4M6 3l2 4M10 3h4v3h-3M2 9v3M4 9c0 3-1 4-2 5M7 9h4c0 3-1 4-3 5M13 9v5l2-2" stroke="#d8ecff" fill="none" />
      </svg>
      <h1 className="ml-[5px] text-[13px] text-black font-['Noto_Sans',sans-serif]">108658301: Min-ST-Real - GBPJPY,M15</h1>
    </div>
    <div className="mr-[3px] flex h-[18px] rounded-b-[4px] border border-t-0 border-[#a9bad6] bg-[#3a598f]">
      <button aria-label="Minimize" className="flex w-[28px] items-center justify-center border-r border-[#8fa3c6]"><Glyph kind="min" /></button>
      <button aria-label="Restore" className="flex w-[27px] items-center justify-center border-r border-[#8fa3c6]"><Glyph kind="restore" /></button>
      <button aria-label="Close" className="flex w-[47px] items-center justify-center"><Glyph kind="close" /></button>
    </div>
  </div>
);

const Toolbar = () => (
  <div className="flex h-[28px] items-center border-t border-b-2 border-t-white border-b-[#7c7c7c] bg-[#f0f0f0] px-[2px] text-[11px]">
    <Grip />
    <MenuTool name="newChart" />
    <MenuTool name="profiles" />
    <Separator />
    {['market', 'target', 'favorites', 'terminal', 'tester'].map((n) => (
      <Tool key={n} name={n} />
    ))}
    <Separator />
    <button className="flex w-[74px] items-center gap-[4px] whitespace-nowrap pl-[5px]">
      <Icon name="order" />
      新規注文
    </button>
    <Tool name="book" />
    <button className="flex w-[78px] items-center gap-[6px] whitespace-nowrap pl-[5px]">
      <Icon name="expert" />
      自動売買
    </button>
    <Separator />
    <Grip />
    <Tool name="bars" />
    <Tool name="candle" pressed />
    <Tool name="lineChart" />
    <Separator />
    <Tool name="zoomIn" />
    <Tool name="zoomOut" />
    <Separator />
    <Tool name="autoScroll" pressed />
    <Tool name="shift" pressed />
    <Separator />
    <MenuTool name="indicators" />
    <MenuTool name="clock" />
    <MenuTool name="template" />
    <Separator />
    <Grip />
    <Tool name="cursor" pressed />
    <Tool name="cross" />
    <Separator />
    {['vline', 'hline', 'trend', 'channel', 'fibo', 'text', 'label'].map((n) => (
      <Tool key={n} name={n} />
    ))}
    <MenuTool name="arrows" />
    <Separator />
    <Grip />
    {['M1', 'M5', 'M15', 'M30', 'H1', 'H4', 'D1', 'W1', 'MN'].map((p) => (
      <button
        key={p}
        className={`h-[23px] w-[26px] mx-px text-center text-[9px] text-[#444] font-['DejaVu_Sans_Condensed','DejaVu_Sans',sans-serif] ${
          p === 'M15' ? 'border border-[#a0a0a0] border-r-white border-b-white bg-[#f8f8f8]' : ''
        }`}
      >
        {p}
      </button>
    ))}
    <Separator />
    <label className="ml-auto flex h-full items-center border-l border-[#a0a0a0] bg-white pr-[4px]">
      <input aria-label="Search" className="w-[146px] bg-white outline-none" />
      <svg width="16" height="16" viewBox="0 0 16 16" fill="none" stroke="#2458c8">
        <ellipse cx="10" cy="5" rx="3.500" ry="4" strokeWidth="1.500" />
        <path d="M8 8l-5 6" strokeWidth="3" />
      </svg>
    </label>
    <button aria-label="Messages" className="flex h-full w-[34px] items-center justify-center border-l border-[#a0a0a0] bg-[#d8d8d8]">
      <svg width="17" height="17" className="font-['DejaVu_Sans',sans-serif] text-[10px] font-bold">
        <path d="M1 0h15v13H7l-1 4-2-4H1z" fill="#5d7bb8" />
        <text x="5" y="10" fill="#fff">4</text>
      </svg>
    </button>
  </div>
);

// Tops of the taskbar icons, one per 62px button; the rest is below the screen edge.
const taskIcons: (React.ReactNode | null)[] = [
  <rect x="14" y="5" width="14" height="3" fill="#e0b050" />,
  <rect x="14" y="3" width="32" height="5" fill="#5c6068" />,
  <path d="M13 8a5 5 0 0 1 10 0zM27 8a5 5 0 0 1 10 0z" fill="#f4f0e0" />,
  <path d="M13 8q3-5 8-5h15q6 0 8 5z" fill="#1c78b8" />,
  <path d="M19 8q10-7 20 0z" fill="#9ccc2c" />,
  <path d="M19 8q10-9 20 0z" fill="#a8d82c" />,
  <rect x="20" y="6" width="16" height="2" fill="#2c64a8" />,
  <rect x="20" y="6" width="16" height="2" fill="#2c64a8" />,
  <rect x="20" y="6" width="16" height="2" fill="#2c64a8" />,
  <rect x="13" y="3" width="31" height="5" fill="#30343c" />,
  <rect x="15" y="3" width="27" height="5" fill="#f4f4f8" />,
  <path d="M14 8l3-5h26l3 5z" fill="#d8cce8" />,
  <rect x="13" y="3" width="31" height="5" fill="#f6f0ec" />,
  <path d="M12 8q14-9 30 0z" fill="#f4d4d4" stroke="#c83030" />,
  <path d="M36 8v-4q6 0 8 4z" fill="#d8a070" />,
  <path d="M14.500 8V3.500h29V8" fill="#fff" stroke="#e01020" strokeWidth="2" />,
  <path d="M14.500 8V3.500h29V8" fill="#fff" stroke="#e01020" strokeWidth="2" />,
  <rect x="15" y="4" width="28" height="4" rx="1" fill="#08080c" />,
  <path d="M16 8l4-4h18l4 4z" fill="#e8a030" />,
];
const activeTasks = [0, 3, 13, 14];

const Taskbar = () => (
  <div className="flex h-2 overflow-hidden border-t border-[#082040] bg-linear-to-r from-[#10407e] via-[#0d3c8a] to-[#0e3468]">
    <svg width="138" height="8" viewBox="0 0 138 8">
      <path d="M12 8q15-13 30 0z" fill="#8fb4cc" />
      <path d="M58 3h2M62 3h2M66 3h2" stroke="#06204c" />
      <path d="M99 8q8-7 20-5l-6 5z" fill="#e8c030" />
    </svg>
    {taskIcons.map((icon, i) => (
      <button
        key={i}
        aria-label={`Task ${i + 1}`}
        className={`mr-1 h-2 w-[58px] rounded-t-[2px] ${activeTasks.includes(i) ? 'bg-[#5f86b8]' : i === 18 ? 'bg-linear-to-r from-[#90d890] to-[#5f86b8] from-60% to-60%' : ''}`}
      >
        <svg width="58" height="8">{icon}</svg>
      </button>
    ))}
    <time className="mr-[29px] ml-auto h-[7px] text-[7px] leading-[7px] text-white font-['Noto_Sans',sans-serif]">11:37</time>
    <span className="w-[14px] border border-[#8aa0c0] bg-[#33517c]" />
  </div>
);

const StatusBar = () => (
  <footer className="flex h-[21px] items-center border-t border-white bg-[#f0f0f0] pr-[2px] text-[11px] text-[#111]">
    <span className="flex-1 pl-[2px]">F1キーでヘルプが表示されます</span>
    <span className="h-4 w-[134px] border-l border-[#a0a0a0] pl-[5px] text-[12px] leading-4 font-['Noto_Sans',sans-serif]">Gbpjpy</span>
    <span className="h-4 w-[119px] border-l border-[#a0a0a0]" />
    <span className="h-4 w-[84px] border-l border-[#a0a0a0]" />
    <span className="h-4 w-[84px] border-l border-[#a0a0a0]" />
    <span className="h-4 w-[82px] border-l border-[#a0a0a0]" />
    <span className="h-4 w-[83px] border-l border-[#a0a0a0]" />
    <span className="h-4 w-[80px] border-l border-[#a0a0a0]" />
    <span className="flex h-4 w-[160px] items-center border-l border-[#a0a0a0] pl-[5px] text-[12px] font-['Noto_Sans',sans-serif]">
      <svg width="24" height="12" shapeRendering="crispEdges">
        {Array.from({ length: 8 }, (_, i) => (
          <g key={i}>
            <rect x={i * 3} y="0" width="2" height={9 - i} fill="#687c10" />
            <rect x={i * 3} y={10 - i} width="2" height={2 + i} fill="#123c5c" />
          </g>
        ))}
      </svg>
      <span className="ml-[45px]">34/1 kb</span>
    </span>
  </footer>
);

export default function App() {
  return (
    <div className="flex min-h-screen bg-[#f0f0f0] font-['Noto_Sans_CJK_JP',sans-serif]">
      {/* Sliver of the desktop and the window behind */}
      <aside className="flex w-2 shrink-0 flex-col bg-[#fcfcfd]">
        <div className="h-[312px] bg-black" />
        <div className="h-[26px] border-r border-[#8fa0c0] bg-[#26365c]" />
        <div className="h-6 border-2 border-l-0 border-[#70777e] bg-[#ccd2dc]" />
        <div className="h-[6px] bg-[#35566a]" />
        <div className="h-[24px] border-b border-[#a9b0cc] bg-linear-to-b from-white to-[#d8dcf0]" />
        <div className="h-[33px] border-b border-[#a9b0cc] bg-linear-to-b from-white to-[#d8e0f4]" />
        <div className="flex-1" />
        <div className="h-[22px] border-t border-[#b8c8e0] bg-[#e9f1fb]" />
      </aside>

      <div className="flex min-w-0 flex-1 flex-col">
        <TitleBar />
        <nav className="flex h-[22px] items-center border-b border-[#a0a0a0] bg-[#f0f0f0] pl-[6px] text-[11px]">
          {menus.map((m) => (
            <button key={m.text} className={`whitespace-nowrap text-left text-[#a0a0a0] ${m.width}`}>
              {m.text}
            </button>
          ))}
        </nav>
        <Toolbar />

        <main className="grid flex-1 grid-cols-[971fr_945fr] items-start border-r-2 border-l-2 border-l-[#7c7c7c] border-r-[#e4e4e4] bg-[#a4a8ac]">
          <div>
            <ChartWindow chart={daily} frame="pr-[7px] pb-2 pl-[7px]" bar="h-[28px] pl-[3px] pr-[2px]" plot="h-[402px]" timer="pb-[13px]" axis="-mt-[14px]" axisWidth="w-[42px]" times="h-4" badge="top-[49px]" />
            <ChartWindow chart={h1} frame="mr-1 pr-[5px] pb-[7px] pl-1" bar="h-[25px] pl-[3px] pr-[2px]" plot="h-[407px]" timer="pb-[29px]" axis="-mt-[10px]" axisWidth="w-[42px]" times="h-[17px]" badge="top-[92px]" />
          </div>
          <div>
            <ChartWindow chart={h4} frame="pr-[7px] pb-[3px] pl-[2px]" bar="h-[28px] pl-[3px] pr-[2px]" plot="h-[401px]" timer="pb-[13px]" axis="mt-[17px]" axisWidth="w-[42px]" times="h-4" badge="top-[49px]" />
            <ChartWindow chart={m15} frame="-ml-1 pr-[5px] pb-2 pl-[6px]" bar="h-[29px] pl-[3px] pr-[2px]" plot="h-[407px]" timer="pb-[29px]" axis="-mt-[10px]" axisWidth="w-[42px]" times="h-4" />
          </div>
        </main>

        <nav className="flex h-[20px] items-start border-t border-black bg-[#f0f0f0] pl-[2px] text-[11px] text-[#6e6e6e] font-['DejaVu_Sans_Condensed','DejaVu_Sans',sans-serif]">
          {tabs.map((t, i) => (
            <button key={i} className={`my-[2px] h-[14px] border-r leading-[14px] ${i < 7 ? 'border-[#6e6e6e]' : 'border-transparent'} ${t.width}`}>
              {t.text}
            </button>
          ))}
          <button className="-mt-px h-[19px] w-[84px] border border-r-2 border-black border-t-white bg-white text-black">GBPJPY,M15</button>
          <svg width="20" height="8" className="mt-[5px] mr-[6px] ml-auto" fill="#808080">
            <path d="M4 0v7L1 3.500zM16 0v7l3-3.500z" />
          </svg>
        </nav>
        <StatusBar />
        <Taskbar />
      </div>
    </div>
  );
}
